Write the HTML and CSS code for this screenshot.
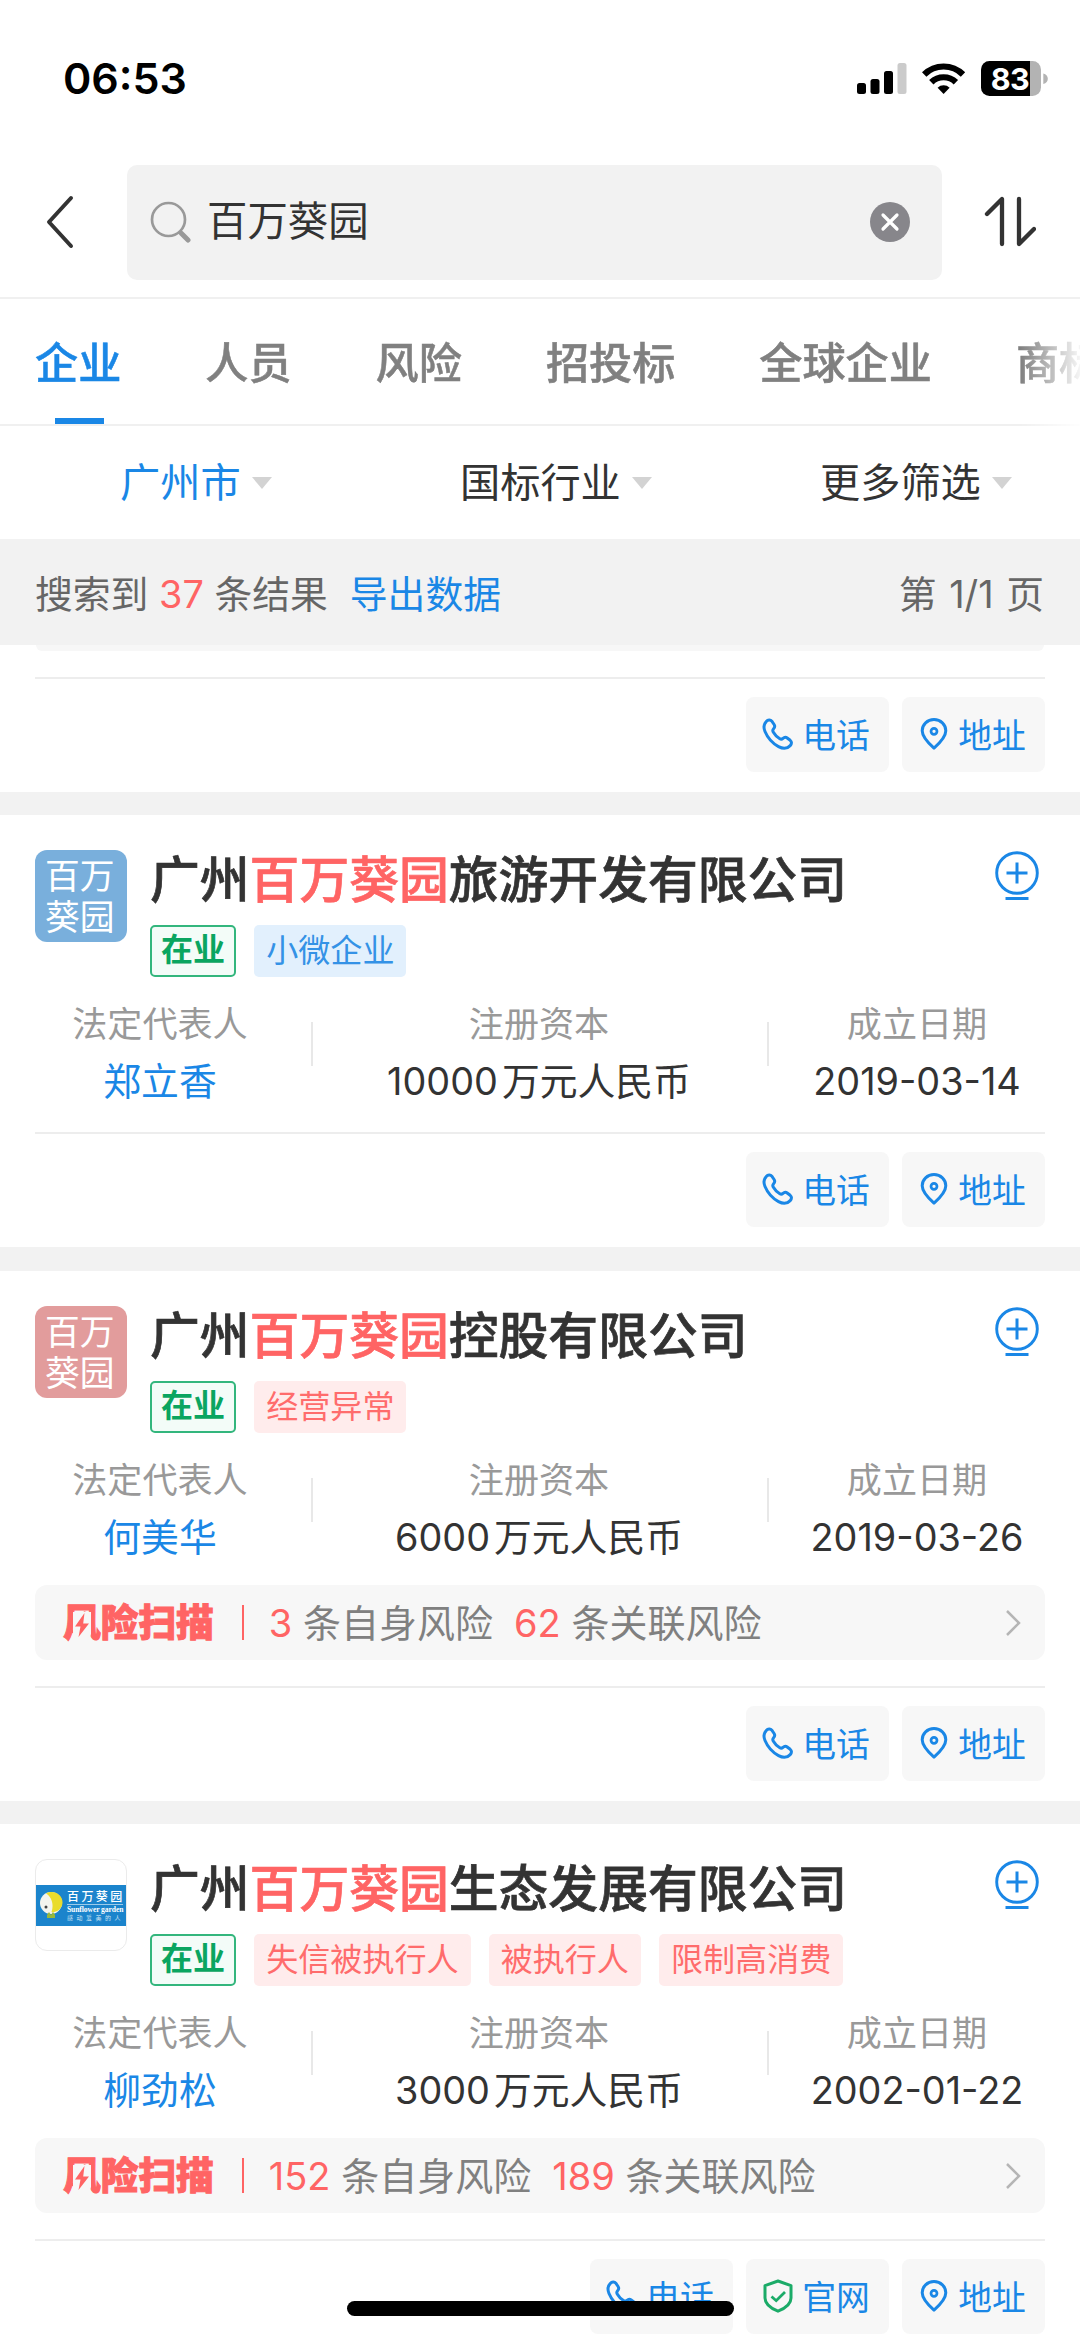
FILE: index.html
```html
<!DOCTYPE html>
<html lang="zh-CN">
<head>
<meta charset="utf-8">
<title>百万葵园</title>
<link rel="stylesheet" href="styles.css">
</head>
<body>
<svg width="0" height="0" class="defs">
  <symbol id="phone" viewBox="0 0 32 32"><path d="M4.2 3.6C6 1.600 8.400 1.400 9.800 3.200l2.300 3.300c1 1.500.7 2.900-.5 4.200-1 1.100-1.100 2-.4 3.200 1.600 2.800 3.700 5 6.600 6.800 1.200.7 2.100.6 3.200-.4 1.300-1.200 2.800-1.400 4.200-.3l3 2.300c1.700 1.400 1.700 3.600 0 5.300-3 3.200-7.200 3.400-11.700 1C10.900 25.500 5.700 20 3 13.500 1.400 9.600 1.500 6.300 4.200 3.600z" fill="none" stroke="currentColor" stroke-width="3" stroke-linejoin="round"/></symbol>
  <symbol id="pin" viewBox="0 0 28 32"><path d="M14 30.200C6.500 23.500 2.200 18 2.200 12.800 2.200 6.400 7.300 1.600 14 1.600s11.800 4.800 11.800 11.200c0 5.200-4.300 10.700-11.800 17.400z" fill="none" stroke="currentColor" stroke-width="3" stroke-linejoin="round"/><circle cx="14" cy="13.300" r="3" fill="none" stroke="currentColor" stroke-width="2.700"/></symbol>
  <symbol id="shield" viewBox="0 0 30 34"><path d="M15 2 28 6.600V19c0 6-5 10-13 13.200C7 29 2 25 2 19V6.600z" fill="none" stroke="currentColor" stroke-width="3" stroke-linejoin="round"/><path d="M8.500 17.500l4.700 4.200 8.800-8.700" fill="none" stroke="currentColor" stroke-width="2.800"/></symbol>
  <symbol id="add" viewBox="0 0 44 52"><circle cx="22" cy="23" r="20.300" fill="none" stroke="currentColor" stroke-width="2.900"/><path d="M22 12.500v21M11.500 23h21M10.500 48.500h23" fill="none" stroke="currentColor" stroke-width="3"/></symbol>
  <symbol id="next" viewBox="0 0 16 28"><path d="M2 2l12 12L2 26" fill="none" stroke="currentColor" stroke-width="2.500"/></symbol>
  <symbol id="bolt" viewBox="0 0 18 28"><path d="M0 0H18V22L16 28H0z" fill="#f7f7f7"/><path d="M11.500 1 2 14.500h5.500L5.500 25 16 11.500h-5.800z" fill="#ff6464"/></symbol>
</svg>

<div class="screen">
  <header class="status">
    <span class="time">06:53</span>
    <svg class="status-icons" width="196" height="40" viewBox="854 60 196 40">
      <rect x="857" y="83" width="9" height="11" rx="2.500"/>
      <rect x="870.500" y="79" width="9" height="15" rx="2.500"/>
      <rect x="884" y="71" width="9" height="23" rx="2.500"/>
      <rect x="897.500" y="63" width="9" height="31" rx="2.500" fill="#cbcbcb"/>
      <path d="M924.200 74.500a27.500 27.500 0 0 1 38.800 0M931.300 82.300a17.500 17.500 0 0 1 24.600 0" fill="none" stroke="#000" stroke-width="6.200"/>
      <path d="M943.600 94l-6-6.200a8.600 8.600 0 0 1 12 0z"/>
      <clipPath id="cell"><rect x="981" y="61" width="60" height="35" rx="8.500"/></clipPath>
      <g clip-path="url(#cell)"><rect x="981" y="61" width="49" height="35"/><rect x="1030" y="61" width="11" height="35" fill="#b3b3b3"/></g>
      <path d="M1043.300 73.500c6 1.500 6 9 0 10.500z" fill="#b3b3b3"/>
      <text class="charge" x="1010" y="89.500" text-anchor="middle">83</text>
    </svg>
  </header>

  <div class="searchbar">
    <svg class="back" width="30" height="54" viewBox="0 0 30 54"><path d="M26 3 4 27l22 24" fill="none" stroke="#333" stroke-width="4" stroke-linecap="round" stroke-linejoin="round"/></svg>
    <div class="search">
      <svg width="42" height="42" viewBox="0 0 42 42"><circle cx="18.500" cy="18.500" r="16.500" fill="none" stroke="#999" stroke-width="2.700"/><path d="M31.500 32.500l6.500 6.500" stroke="#999" stroke-width="5" stroke-linecap="round"/></svg>
      <span class="query">百万葵园</span>
      <svg class="clear" width="40" height="40" viewBox="0 0 40 40"><circle cx="20" cy="20" r="20" fill="#87868b"/><path d="M13 13l14 14M27 13 13 27" stroke="#fff" stroke-width="3.200" stroke-linecap="round"/></svg>
    </div>
    <svg class="sort" width="52" height="54" viewBox="0 0 52 54"><path d="M3 19 18 4v45M35 4v45l15-15" fill="none" stroke="#333" stroke-width="4.300" stroke-linecap="round" stroke-linejoin="round"/></svg>
  </div>

  <nav class="tabs">
    <span class="tab tab--on">企业</span><span class="tab">人员</span><span class="tab">风险</span><span class="tab">招投标</span><span class="tab">全球企业</span><span class="tab">商标</span>
  </nav>

  <div class="filters">
    <span class="filter filter--on">广州市</span>
    <span class="filter">国标行业</span>
    <span class="filter">更多筛选</span>
  </div>

  <div class="summary">
    <span>搜索到 <b>37</b> 条结果</span>
    <a class="export">导出数据</a>
    <span class="page">第 1/1 页</span>
  </div>

  <main>
    <section class="card card--cut">
      <div class="risk-tail"></div>
      <div class="actions">
        <a class="action"><svg class="ic"><use href="#phone"/></svg>电话</a>
        <a class="action"><svg class="ic"><use href="#pin"/></svg>地址</a>
      </div>
    </section>

    <section class="card card--plain">
      <div class="head">
        <div class="logo logo--blue">百万葵园</div>
        <div class="names">
          <h2>广州<em>百万葵园</em>旅游开发有限公司</h2>
          <div class="tags"><span class="tag tag--live">在业</span><span class="tag tag--info">小微企业</span></div>
        </div>
        <svg class="add"><use href="#add"/></svg>
      </div>
      <dl class="facts">
        <div><dt>法定代表人</dt><dd class="link">郑立香</dd></div>
        <div><dt>注册资本</dt><dd><span class="num">10000</span>万元人民币</dd></div>
        <div><dt>成立日期</dt><dd>2019-03-14</dd></div>
      </dl>
      <div class="actions">
        <a class="action"><svg class="ic"><use href="#phone"/></svg>电话</a>
        <a class="action"><svg class="ic"><use href="#pin"/></svg>地址</a>
      </div>
    </section>

    <section class="card">
      <div class="head">
        <div class="logo logo--red">百万葵园</div>
        <div class="names">
          <h2>广州<em>百万葵园</em>控股有限公司</h2>
          <div class="tags"><span class="tag tag--live">在业</span><span class="tag tag--warn">经营异常</span></div>
        </div>
        <svg class="add"><use href="#add"/></svg>
      </div>
      <dl class="facts">
        <div><dt>法定代表人</dt><dd class="link">何美华</dd></div>
        <div><dt>注册资本</dt><dd><span class="num">6000</span>万元人民币</dd></div>
        <div><dt>成立日期</dt><dd>2019-03-26</dd></div>
      </dl>
      <div class="risk">
        <span class="risk-name">风险扫描<svg class="bolt"><use href="#bolt"/></svg></span>
        <span class="risk-item"><b>3</b> 条自身风险</span>
        <span class="risk-item"><b>62</b> 条关联风险</span>
        <svg class="next"><use href="#next"/></svg>
      </div>
      <div class="actions">
        <a class="action"><svg class="ic"><use href="#phone"/></svg>电话</a>
        <a class="action"><svg class="ic"><use href="#pin"/></svg>地址</a>
      </div>
    </section>

    <section class="card">
      <div class="head">
        <div class="logo logo--brand">
          <div class="brand">
            <svg width="25" height="30" viewBox="0 0 25 30"><circle cx="12" cy="13" r="11" fill="#f4f4ee"/><path d="M7 3.500C15-1 24 5 23.500 13c-.5 7-8 10-11 9C15 15 13 7 7 3.500z" fill="#e9dc2d"/><circle cx="7" cy="17" r="1.500" fill="#444"/><path d="M8 25l2-3 2 3 2-3 2 3v3H8z" fill="#98b83c"/></svg>
            <div class="brand-text"><span class="brand-cn">百万葵园</span><span class="brand-en">Sunflower garden</span><span class="brand-sub">感动爱美的人</span></div>
          </div>
        </div>
        <div class="names">
          <h2>广州<em>百万葵园</em>生态发展有限公司</h2>
          <div class="tags"><span class="tag tag--live">在业</span><span class="tag tag--warn">失信被执行人</span><span class="tag tag--warn">被执行人</span><span class="tag tag--warn">限制高消费</span></div>
        </div>
        <svg class="add"><use href="#add"/></svg>
      </div>
      <dl class="facts">
        <div><dt>法定代表人</dt><dd class="link">柳劲松</dd></div>
        <div><dt>注册资本</dt><dd><span class="num">3000</span>万元人民币</dd></div>
        <div><dt>成立日期</dt><dd>2002-01-22</dd></div>
      </dl>
      <div class="risk">
        <span class="risk-name">风险扫描<svg class="bolt"><use href="#bolt"/></svg></span>
        <span class="risk-item"><b>152</b> 条自身风险</span>
        <span class="risk-item"><b>189</b> 条关联风险</span>
        <svg class="next"><use href="#next"/></svg>
      </div>
      <div class="actions">
        <a class="action"><svg class="ic"><use href="#phone"/></svg>电话</a>
        <a class="action"><svg class="ic ic--shield"><use href="#shield"/></svg>官网</a>
        <a class="action"><svg class="ic"><use href="#pin"/></svg>地址</a>
      </div>
    </section>
  </main>

  <span class="mark mark--right">88x9rry</span>
  <span class="mark mark--left">88x9rry</span>
  <div class="home"></div>
</div>
</body>
</html>
```
FILE: styles.css
```css
* { box-sizing: border-box; }
body, h2, dl, dd { margin: 0; }
b, em { font-weight: inherit; font-style: normal; }
body {
  background: #fff;
  color: #333;
  font-family: Inter, "Noto Sans CJK SC", sans-serif;
}
svg { display: block; flex: none; }
.defs { position: absolute; }
.screen {
  position: relative;
  width: 1080px;
  height: 2339px;
  overflow: hidden;
}

/* status bar */
.status {
  display: flex;
  justify-content: space-between;
  height: 165px;
  padding: 57px 30px 0 63px;
}
.time {
  color: #000;
  font-size: 43px;
  font-weight: 600;
  line-height: 42px;
}
.status-icons { margin-top: 3px; }
.charge { fill: #fff; font-size: 30.500px; font-weight: 700; letter-spacing: -0.5px; }

/* search */
.searchbar {
  display: flex;
  align-items: center;
  height: 134px;
  padding: 0 43px 18px 45px;
  border-bottom: 2px solid #f0f0f0;
}
.back { margin-right: 52px; }
.search {
  display: flex;
  align-items: center;
  width: 815px;
  height: 115px;
  padding: 0 32px 0 23px;
  border-radius: 10px;
  background: #f2f2f2;
}
.query { margin-left: 15px; font-size: 40.400px; line-height: 50px; }
.clear { margin-left: auto; }
.sort { margin-left: 42px; }

/* tabs */
.tabs {
  display: flex;
  gap: 84px;
  height: 127px;
  padding-left: 35px;
  border-bottom: 2px solid #f0f0f0;
  overflow: hidden;
  -webkit-mask-image: linear-gradient(to right, #000 1020px, transparent 1085px);
  mask-image: linear-gradient(to right, #000 1020px, transparent 1085px);
}
.tab {
  display: flex;
  flex: none;
  flex-direction: column;
  align-items: center;
  justify-content: space-between;
  color: #808080;
  font-size: 43.150px;
  font-weight: 500;
  line-height: 128px;
  height: 125px;
  -webkit-text-stroke: 0.500px currentColor;
}
.tab--on { color: #1a87e6; }
.tab--on::after {
  content: "";
  width: 49px;
  height: 7px;
  margin: -9px 0 0 3px;
  background: #1a87e6;
}

/* filters */
.filters {
  display: grid;
  grid-template-columns: 340px 360px 1fr;
  align-items: center;
  height: 113px;
  padding: 0 0 0 120px;
  font-size: 40.200px;
}
.filter { display: flex; align-items: center; gap: 11px; line-height: 50px; }
.filter::after {
  content: "";
  border: 10px solid transparent;
  border-top: 12px solid #d3d3d3;
  border-bottom: 0;
}
.filter--on { color: #1a87e6; }

/* result summary */
.summary {
  display: flex;
  align-items: center;
  height: 106px;
  padding: 3px 36px 0 35px;
  background: #f2f2f2;
  color: #666;
  font-size: 37.800px;
  line-height: 50px;
}
.summary b { color: #ff6464; }
.export { margin-left: 22px; color: #1a87e6; }
.page { margin-left: auto; word-spacing: 2px; }

/* company cards */
main { background: #f2f2f2; }
.card {
  padding: 35px 35px 20px;
  margin-bottom: 23px;
  background: #fff;
}
.card--cut { padding-top: 0; }
.card--plain { margin-bottom: 24px; }
.risk-tail { height: 6px; margin: 0 1px; border-radius: 0 0 8px 8px; background: #f7f7f7; }
.head { display: flex; height: 127px; }
.logo {
  width: 92px;
  height: 92px;
  padding: 6px 10px;
  border-radius: 12px;
  color: #fff;
  font-size: 34.800px;
  line-height: 41px;
  overflow: hidden;
}
.logo--blue { background: #79afdc; }
.logo--red { background: #e29c9c; }
.logo--brand { display: flex; align-items: center; padding: 0; border: 1px solid #ebebeb; }
.brand { display: flex; align-items: center; gap: 3px; width: 100%; height: 41px; padding-left: 3px; background: #1b84cc; }
.brand-text { display: flex; flex-direction: column; white-space: nowrap; width: 56px; }
.brand-cn { font-size: 12px; font-weight: 500; line-height: 15px; letter-spacing: 2.400px; border-bottom: 1px solid #9ccbea; }
.brand-en { font-family: "Liberation Serif", serif; font-size: 7.600px; font-weight: 700; line-height: 9px; letter-spacing: -0.100px; }
.brand-sub { font-size: 6px; line-height: 8px; letter-spacing: 3.500px; color: #c5e0f2; }
.names { margin-left: 23px; }
h2 {
  font-size: 49.800px;
  font-weight: 500;
  line-height: 61px;
  height: 60px;
  white-space: nowrap;
  -webkit-text-stroke: 0.700px currentColor;
}
h2 em { color: #ff6464; }
.tags { display: flex; gap: 18px; margin-top: 15px; }
.tag { height: 52px; padding: 0 12px; border-radius: 5px; font-size: 32.100px; line-height: 51px; }
.tag--live { padding: 0 9px; border: 2px solid #33b67d; background: #f3fcf8; color: #0aa560; font-weight: 700; line-height: 46px; }
.tag--info { background: #e2f0fd; color: #3492e6; }
.tag--warn { background: #ffecec; color: #ff6c6c; }
.add { width: 44px; height: 52px; margin: 0 6px 0 auto; color: #1a87e6; }

.facts {
  display: grid;
  grid-template-columns: 302px 456px 300px;
  margin: 28px -23px 0 -26px;
  text-align: center;
  background:
    linear-gradient(#e8e8e8, #e8e8e8) 302px 17px / 2px 44px no-repeat,
    linear-gradient(#e8e8e8, #e8e8e8) 758px 17px / 2px 44px no-repeat;
}
dt { color: #999; font-size: 35.100px; line-height: 39px; height: 38px; }
dd { margin-top: 15px; font-size: 37.800px; line-height: 46px; }
.num { margin-right: 4px; }
.link { color: #1a87e6; }

.risk {
  display: flex;
  align-items: center;
  height: 75px;
  margin-top: 25px;
  padding: 0 24px 0 28px;
  border-radius: 12px;
  background: #f7f7f7;
  color: #808080;
  font-size: 38px;
  line-height: 50px;
}
.risk b { color: #ff6464; }
.risk-name {
  position: relative;
  margin-right: 25px;
  padding-right: 28px;
  color: #ff6464;
  font-size: 37.700px;
  font-weight: 900;
  line-height: 35px;
  -webkit-text-stroke: 1px #ff6464;
  border-right: 2px solid #ff6464;
}
.bolt { position: absolute; left: 10px; top: 7px; width: 18px; height: 28px; }
.risk-item { margin-right: 21px; }
.next { width: 16px; height: 28px; margin-left: auto; color: #b5b5b5; }

.actions {
  display: flex;
  justify-content: flex-end;
  gap: 13px;
  margin-top: 28px;
  padding-top: 18px;
  border-top: 2px solid #ededed;
}
.risk + .actions, .risk-tail + .actions { margin-top: 26px; }
.action {
  display: flex;
  align-items: center;
  justify-content: center;
  gap: 8px;
  width: 143px;
  height: 75px;
  padding: 0 3px 2px 0;
  border-radius: 8px;
  background: #f7f7f7;
  color: #1a87e6;
  font-size: 33.800px;
}
.ic { width: 32px; height: 32px; }
.ic--shield { height: 34px; color: #1bab68; }

/* overlays */
.mark {
  position: absolute;
  color: rgba(0, 0, 0, 0.013);
  font-size: 40px;
  line-height: 48px;
  letter-spacing: 12px;
}
.mark--right { left: 843px; top: 134px; }
.mark--left { left: 10px; top: 230px; }
.home {
  position: absolute;
  left: 347px;
  top: 2301px;
  width: 387px;
  height: 15px;
  border-radius: 8px;
  background: #000;
}
```
